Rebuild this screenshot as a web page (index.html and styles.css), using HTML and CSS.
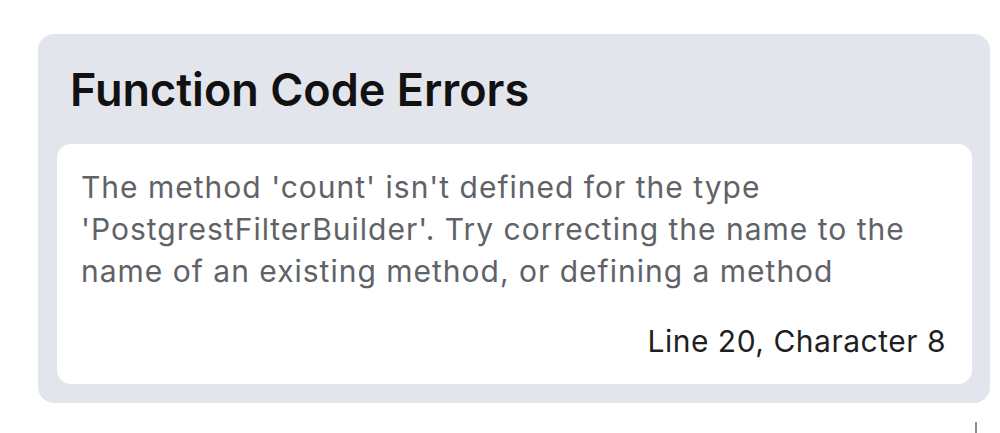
FILE: index.html
```html
<!DOCTYPE html>
<html>
<head>
<meta charset="utf-8">
<link rel="stylesheet" href="styles.css">
</head>
<body>
<div class="page">
  <section class="errors-card">
    <h2 class="errors-title">Function Code Errors</h2>
    <div class="error-item">
      <p class="error-message">The method 'count' isn't defined for the type 'PostgrestFilterBuilder'. Try correcting the name to the name of an existing method, or defining a method</p>
      <div class="error-location">Line 20, Character 8</div>
    </div>
  </section>
  <div class="cursor-row"><span class="cursor"></span></div>
</div>
</body>
</html>
```

FILE: styles.css
```css
html, body {
  margin: 0;
  padding: 0;
  background: #ffffff;
}
body {
  font-family: "Inter", "Open Sans", sans-serif;
  width: 1000px;
  height: 433px;
  overflow: hidden;
}
.page {
  padding: 34px 10px 0 38px;
}
.errors-card {
  width: 952px;
  box-sizing: border-box;
  background: #e2e5ec;
  border-radius: 16px;
  padding: 28px 18px 19px 19px;
}
.errors-title {
  margin: 0 0 26px 13px;
  font-size: 45px;
  line-height: 56px;
  font-weight: 600;
  color: #111111;
}
.error-item {
  background: #ffffff;
  border-radius: 14px;
  padding: 22px 26px 25px 24px;
}
.error-message {
  margin: 0;
  font-size: 30px;
  line-height: 42px;
  letter-spacing: 1px;
  color: #5f6368;
  max-width: 860px;
}
.error-location {
  margin-top: 31px;
  text-align: right;
  font-size: 30px;
  line-height: 36px;
  letter-spacing: 0.5px;
  color: #1f1f1f;
}
.cursor-row {
  display: flex;
  justify-content: flex-end;
  padding: 19px 13px 0 0;
}
.cursor {
  display: block;
  width: 2px;
  height: 12px;
  background: #8a8a8a;
}
```
